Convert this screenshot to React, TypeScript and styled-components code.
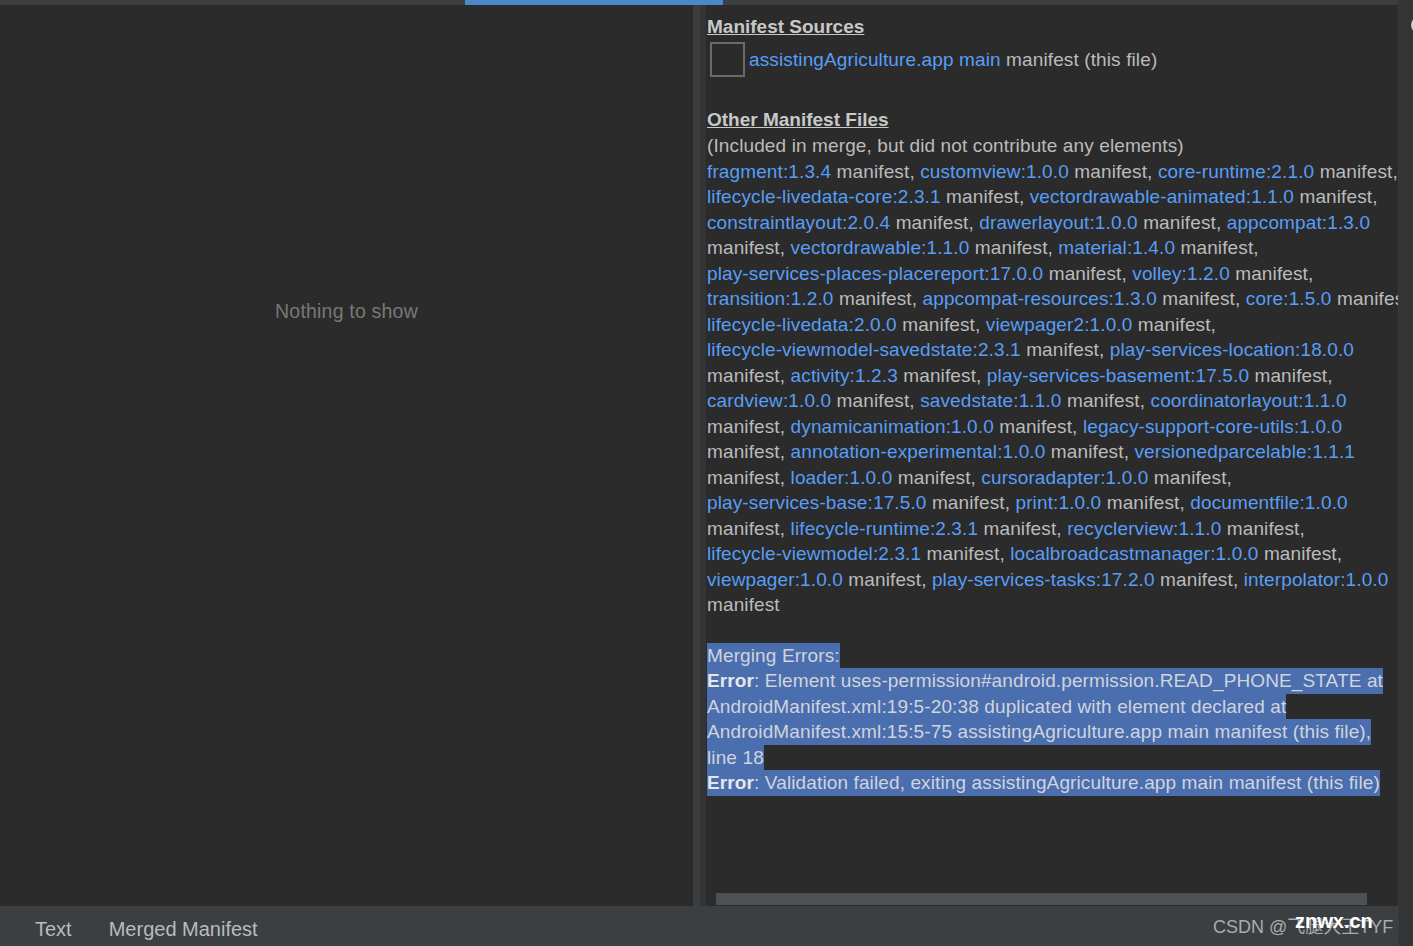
import styled, { createGlobalStyle } from "styled-components";

const GlobalStyle = createGlobalStyle`
  html, body {
    margin: 0;
    padding: 0;
    background: #2b2b2b;
    overflow: hidden;
  }
  * {
    box-sizing: border-box;
  }
`;

const Frame = styled.div`
  width: 1413px;
  height: 946px;
  display: grid;
  grid-template-columns: 1398px 15px;
  font-family: "Liberation Sans", Arial, sans-serif;
  color: #bbbbbb;
`;

const MainColumn = styled.div`
  display: grid;
  grid-template-rows: 5px 1fr 40px;
  min-height: 0;
`;

const TopStrip = styled.div`
  background: #3c3f41;
  padding-left: 465px;
`;

const ActiveMark = styled.div`
  width: 258px;
  height: 5px;
  background: #4a88c7;
`;

const Body = styled.div`
  display: flex;
  min-height: 0;
`;

const EmptyPanel = styled.div`
  width: 693px;
  background: #2b2b2b;
  display: flex;
  flex-direction: column;
  align-items: center;
  padding-top: 295px;
`;

const EmptyText = styled.div`
  font-size: 19.5px;
  letter-spacing: 0.2px;
  color: #787878;
`;

const Divider = styled.div`
  width: 13px;
  display: flex;
`;

const DividerPart = styled.div<{ $tone: string; $w: number }>`
  width: ${(p) => p.$w}px;
  background: ${(p) => p.$tone};
`;

const ManifestPanel = styled.div`
  flex: 1;
  min-width: 0;
  display: flex;
  flex-direction: column;
  background: #2b2b2b;
`;

const Content = styled.div`
  flex: 1;
  overflow: hidden;
  padding: 9px 0 0 1px;
  font-size: 19px;
  letter-spacing: 0.12px;
  line-height: 25.5px;
`;

const Heading = styled.div`
  font-weight: bold;
  text-decoration: underline;
  color: #c8c8c8;
  font-size: 19px;
  letter-spacing: 0;
  line-height: 26.5px;
  white-space: nowrap;
`;

const SourceRow = styled.div`
  display: flex;
  align-items: center;
  gap: 4px;
  height: 38px;
  padding-left: 3px;
  white-space: nowrap;
`;

const Checkbox = styled.div`
  width: 35px;
  height: 35px;
  border: 2px solid #6a6a6a;
  background: #2b2b2b;
`;

const Line = styled.div`
  white-space: nowrap;
`;

const Blank = styled.div<{ $h: number }>`
  height: ${(p) => p.$h}px;
`;

const Link = styled.span`
  color: #589df6;
`;

const Selected = styled.span`
  display: inline-block;
  background: #4b6eaf;
  color: #d0d4dc;
  height: 25.5px;
`;

const Strong = styled.b`
  color: #e4e6ea;
`;

const ScrollTrack = styled.div`
  height: 13px;
  padding: 0 0 1px 10px;
`;

const ScrollThumb = styled.div`
  width: 651px;
  height: 12px;
  background: #4e5052;
`;

const TabBar = styled.div`
  background: #3c3f41;
  display: flex;
  align-items: center;
  padding: 7px 0 0 35px;
  gap: 37px;
  position: relative;
  font-size: 20px;
`;

const Tab = styled.div`
  color: #bbbbbb;
`;

const Watermark = styled.div`
  position: absolute;
  left: 1213px;
  top: 6px;
  white-space: nowrap;
  font-size: 18px;
  color: #a9abad;
  font-family: "Liberation Sans", "Noto Sans CJK SC", sans-serif;
`;

const WatermarkOverlay = styled.span`
  position: absolute;
  left: 82px;
  top: -2px;
  color: #ffffff;
  font-weight: bold;
  font-size: 20px;
`;

const SideStrip = styled.div`
  background: #323436;
  border-left: 1px solid #3a3c3e;
  position: relative;
  overflow: hidden;
`;

const SideIcon = styled.div`
  position: absolute;
  left: 12px;
  top: 17px;
  width: 14px;
  height: 16px;
  border-radius: 50%;
  background: #cfcfcf;
`;

const manifestLines = [
  "fragment:1.3.4 manifest, customview:1.0.0 manifest, core-runtime:2.1.0 manifest,",
  "lifecycle-livedata-core:2.3.1 manifest, vectordrawable-animated:1.1.0 manifest,",
  "constraintlayout:2.0.4 manifest, drawerlayout:1.0.0 manifest, appcompat:1.3.0",
  "manifest, vectordrawable:1.1.0 manifest, material:1.4.0 manifest,",
  "play-services-places-placereport:17.0.0 manifest, volley:1.2.0 manifest,",
  "transition:1.2.0 manifest, appcompat-resources:1.3.0 manifest, core:1.5.0 manifest,",
  "lifecycle-livedata:2.0.0 manifest, viewpager2:1.0.0 manifest,",
  "lifecycle-viewmodel-savedstate:2.3.1 manifest, play-services-location:18.0.0",
  "manifest, activity:1.2.3 manifest, play-services-basement:17.5.0 manifest,",
  "cardview:1.0.0 manifest, savedstate:1.1.0 manifest, coordinatorlayout:1.1.0",
  "manifest, dynamicanimation:1.0.0 manifest, legacy-support-core-utils:1.0.0",
  "manifest, annotation-experimental:1.0.0 manifest, versionedparcelable:1.1.1",
  "manifest, loader:1.0.0 manifest, cursoradapter:1.0.0 manifest,",
  "play-services-base:17.5.0 manifest, print:1.0.0 manifest, documentfile:1.0.0",
  "manifest, lifecycle-runtime:2.3.1 manifest, recyclerview:1.1.0 manifest,",
  "lifecycle-viewmodel:2.3.1 manifest, localbroadcastmanager:1.0.0 manifest,",
  "viewpager:1.0.0 manifest, play-services-tasks:17.2.0 manifest, interpolator:1.0.0",
  "manifest",
];

// words with a version ("name:1.0.0") are links
const ManifestLine = ({ text }: { text: string }) => {
  const words = text.split(" ");
  return (
    <Line>
      {words.map((w, i) => (
        <span key={i}>
          {w.includes(":") ? <Link>{w}</Link> : w}
          {i < words.length - 1 ? " " : null}
        </span>
      ))}
    </Line>
  );
};

const errorLines: { bold?: string; text: string }[] = [
  { text: "Merging Errors:" },
  { bold: "Error", text: ": Element uses-permission#android.permission.READ_PHONE_STATE at " },
  { text: "AndroidManifest.xml:19:5-20:38 duplicated with element declared at " },
  { text: "AndroidManifest.xml:15:5-75 assistingAgriculture.app main manifest (this file), " },
  { text: "line 18 " },
  { bold: "Error", text: ": Validation failed, exiting assistingAgriculture.app main manifest (this file)" },
];

export default function App() {
  return (
    <>
      <GlobalStyle />
      <Frame>
        <MainColumn>
          <TopStrip>
            <ActiveMark />
          </TopStrip>
          <Body>
            <EmptyPanel>
              <EmptyText>Nothing to show</EmptyText>
            </EmptyPanel>
            <Divider>
              <DividerPart $tone="#3b3d3f" $w={7} />
              <DividerPart $tone="#323436" $w={6} />
            </Divider>
            <ManifestPanel>
              <Content>
                <Heading>Manifest Sources</Heading>
                <SourceRow>
                  <Checkbox />
                  <span>
                    <Link>assistingAgriculture.app main</Link> manifest (this file)
                  </span>
                </SourceRow>
                <Blank $h={28} />
                <Heading>Other Manifest Files</Heading>
                <Line>(Included in merge, but did not contribute any elements)</Line>
                {manifestLines.map((l, i) => (
                  <ManifestLine key={i} text={l} />
                ))}
                <Blank $h={25} />
                {errorLines.map((l, i) => (
                  <Line key={i}>
                    <Selected>
                      {l.bold ? <Strong>{l.bold}</Strong> : null}
                      {l.text}
                    </Selected>
                  </Line>
                ))}
              </Content>
              <ScrollTrack>
                <ScrollThumb />
              </ScrollTrack>
            </ManifestPanel>
          </Body>
          <TabBar>
            <Tab>Text</Tab>
            <Tab>Merged Manifest</Tab>
            <Watermark>
              CSDN @飞腿大王TYF
              <WatermarkOverlay>znwx.cn</WatermarkOverlay>
            </Watermark>
          </TabBar>
        </MainColumn>
        <SideStrip>
          <SideIcon />
        </SideStrip>
      </Frame>
    </>
  );
}
